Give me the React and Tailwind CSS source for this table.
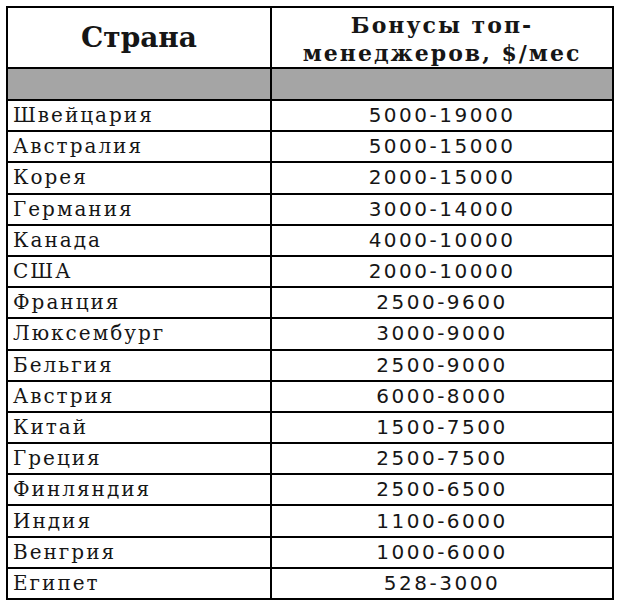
const rows = [
  ["Швейцария", "5000-19000"],
  ["Австралия", "5000-15000"],
  ["Корея", "2000-15000"],
  ["Германия", "3000-14000"],
  ["Канада", "4000-10000"],
  ["США", "2000-10000"],
  ["Франция", "2500-9600"],
  ["Люксембург", "3000-9000"],
  ["Бельгия", "2500-9000"],
  ["Австрия", "6000-8000"],
  ["Китай", "1500-7500"],
  ["Греция", "2500-7500"],
  ["Финляндия", "2500-6500"],
  ["Индия", "1100-6000"],
  ["Венгрия", "1000-6000"],
  ["Египет", "528-3000"],
];

export default function App() {
  return (
    <div className="w-[620px] h-[608px] bg-white pt-[6px] pl-[6px]">
      <table className="w-[608px] border-collapse border-2 border-black text-[#161616]">
        <thead>
          <tr className="h-[59px]">
            <th className="w-[264px] border-2 border-black font-['DejaVu_Serif',serif] font-bold text-[28px] text-center align-middle">
              Страна
            </th>
            <th className="border-2 border-black pt-[3px] font-['DejaVu_Serif',serif] font-bold text-[22px] leading-[28px] tracking-[2px] text-center align-middle">
              Бонусы топ-
              <br />
              менеджеров, $/мес
            </th>
          </tr>
          <tr className="h-[32px] bg-[#a5a5a5]">
            <td className="border-2 border-black"></td>
            <td className="border-2 border-black"></td>
          </tr>
        </thead>
        <tbody>
          {rows.map(([country, bonus]) => (
            <tr key={country} className="h-[31.2px]">
              <td className="border-2 border-black pl-[5px] py-0 font-['DejaVu_Serif',serif] text-[20px] tracking-[2px] leading-[27px] align-middle">
                {country}
              </td>
              <td className="border-2 border-black py-0 text-center font-['DejaVu_Sans',sans-serif] text-[20px] tracking-[2.5px] leading-[27px] align-middle">
                {bonus}
              </td>
            </tr>
          ))}
        </tbody>
      </table>
    </div>
  );
}
